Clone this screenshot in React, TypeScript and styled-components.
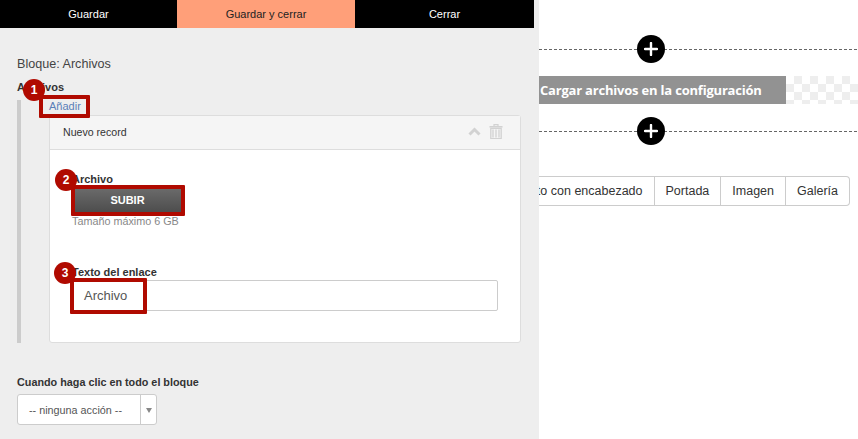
import { createGlobalStyle } from "styled-components";
import styled from "styled-components";

const GlobalStyle = createGlobalStyle`
  html, body {
    margin: 0;
    padding: 0;
    background: #ffffff;
    font-family: "Liberation Sans", Arial, sans-serif;
  }
`;

function ChevronIcon() {
  return (
    <svg width="13" height="9" viewBox="0 0 13 9">
      <path d="M1.5 7.5 L6.5 2.5 L11.5 7.5" fill="none" stroke="#d2d2d2" strokeWidth="3" />
    </svg>
  );
}

function TrashIcon() {
  return (
    <svg width="14" height="15" viewBox="0 0 14 15">
      <path d="M5 2 V0.7 H9 V2" fill="none" stroke="#d2d2d2" strokeWidth="1.2" />
      <rect x="0.5" y="2" width="13" height="1.6" fill="#d2d2d2" />
      <path d="M1.8 4.4 H12.2 V14.6 H1.8 Z M4 5.6 V13.4 M7 5.6 V13.4 M10 5.6 V13.4" fill="none" stroke="#d2d2d2" strokeWidth="1.3" />
    </svg>
  );
}

function PlusCircle() {
  return (
    <PlusBadge>
      <svg width="14" height="14" viewBox="0 0 14 14">
        <path d="M7 1 V13 M1 7 H13" stroke="#ffffff" strokeWidth="2.4" strokeLinecap="round" />
      </svg>
    </PlusBadge>
  );
}

function App() {
  return (
    <Page>
      <GlobalStyle />
      <EditorPanel>
        <TopBar>
          <TopButton>Guardar</TopButton>
          <TopButton $accent>Guardar y cerrar</TopButton>
          <TopButton>Cerrar</TopButton>
        </TopBar>

        <Form>
          <BlockTitle>Bloque: Archivos</BlockTitle>
          <FieldLabel>Archivos</FieldLabel>
          <Repeater>
            <AddLink>Añadir</AddLink>
            <Card>
              <CardHeader>
                <span>Nuevo record</span>
                <CardActions>
                  <ChevronIcon />
                  <TrashIcon />
                </CardActions>
              </CardHeader>
              <CardBody>
                <FileLabel>Archivo</FileLabel>
                <UploadButton>SUBIR</UploadButton>
                <Hint>Tamaño máximo 6 GB</Hint>
                <LinkLabel>Texto del enlace</LinkLabel>
                <TextBox>Archivo</TextBox>
              </CardBody>
            </Card>
          </Repeater>
          <ClickLabel>Cuando haga clic en todo el bloque</ClickLabel>
          <Select>
            <SelectValue>-- ninguna acción --</SelectValue>
            <SelectArrow />
          </Select>
        </Form>

        <Highlight $left={39} $top={95} $width={51} $height={23} />
        <Highlight $left={71} $top={185} $width={114} $height={31} />
        <Highlight $left={70} $top={278} $width={77} $height={36} />
        <Marker $left={23} $top={79}>1</Marker>
        <Marker $left={55} $top={169}>2</Marker>
        <Marker $left={54} $top={262}>3</Marker>
      </EditorPanel>

      <Preview>
        <Divider $top={35}>
          <PlusCircle />
        </Divider>
        <BannerRow>
          <Banner>Cargar archivos en la configuración</Banner>
          <Checker />
        </BannerRow>
        <Divider $top={13}>
          <PlusCircle />
        </Divider>
        <Tabs>
          <Tab>Texto con encabezado</Tab>
          <Tab>Portada</Tab>
          <Tab>Imagen</Tab>
          <Tab>Galería</Tab>
        </Tabs>
      </Preview>
    </Page>
  );
}

export default App;

const Page = styled.div`
  display: flex;
  width: 858px;
  height: 439px;
  overflow: hidden;
`;

const EditorPanel = styled.div`
  position: relative;
  flex: 0 0 539px;
  background-color: #eeeeee;
`;

const TopBar = styled.div`
  display: grid;
  grid-template-columns: 177px 178px 179px;
  width: 534px;
  height: 28px;
  background-color: #000000;
`;

const TopButton = styled.div<{ $accent?: boolean }>`
  display: flex;
  align-items: center;
  justify-content: center;
  font-size: 11px;
  background-color: ${(p) => (p.$accent ? "#ff9f79" : "#000000")};
  color: ${(p) => (p.$accent ? "#222222" : "#ffffff")};
`;

const Form = styled.div`
  padding: 28px 0 0 17px;
`;

const BlockTitle = styled.div`
  font-size: 12.6px;
  line-height: 16px;
  color: #444444;
`;

const FieldLabel = styled.div`
  font-size: 11px;
  line-height: 14px;
  font-weight: bold;
  color: #333333;
  margin-top: 8px;
`;

const Repeater = styled.div`
  box-sizing: border-box;
  width: 504px;
  height: 243px;
  margin-top: 6px;
  padding-left: 28px;
  border-left: 4px solid #cccccc;
`;

const AddLink = styled.div`
  height: 15px;
  font-size: 11px;
  line-height: 13px;
  color: #5a7fb8;
`;

const Card = styled.div`
  box-sizing: border-box;
  width: 472px;
  height: 228px;
  border: 1px solid #dddddd;
  border-radius: 3px;
  background-color: #ffffff;
`;

const CardHeader = styled.div`
  display: flex;
  align-items: center;
  justify-content: space-between;
  box-sizing: border-box;
  height: 34px;
  padding: 0 17px 2px 13px;
  background-color: #f5f5f5;
  border-bottom: 1px solid #dddddd;
  font-size: 10.6px;
  color: #333333;
`;

const CardActions = styled.div`
  display: flex;
  align-items: center;
  gap: 8px;
`;

const CardBody = styled.div`
  padding: 14px 22px 0;
`;

const FileLabel = styled(FieldLabel)`
  margin-top: 8px;
`;

const UploadButton = styled.div`
  display: flex;
  align-items: center;
  justify-content: center;
  box-sizing: border-box;
  width: 108px;
  height: 25px;
  margin: 2px 0 0 2px;
  padding-bottom: 2px;
  background: linear-gradient(#6b6b6b, #4c4c4c);
  border-right: 1px solid #ffffff;
  font-size: 11px;
  font-weight: bold;
  color: #ffffff;
`;

const Hint = styled.div`
  margin-top: 2px;
  font-size: 10.8px;
  line-height: 13px;
  color: #888888;
`;

const LinkLabel = styled(FieldLabel)`
  margin-top: 37px;
`;

const TextBox = styled.div`
  display: flex;
  align-items: center;
  box-sizing: border-box;
  width: 426px;
  height: 31px;
  margin-top: 1px;
  padding-left: 11px;
  border: 1px solid #cccccc;
  border-radius: 2px;
  background-color: #ffffff;
  font-size: 13px;
  color: #555555;
`;

const ClickLabel = styled(FieldLabel)`
  margin-top: 32px;
  font-size: 10.8px;
`;

const Select = styled.div`
  display: flex;
  box-sizing: border-box;
  width: 140px;
  height: 31px;
  margin-top: 5px;
  border: 1px solid #cccccc;
  border-radius: 3px;
  background-color: #ffffff;
`;

const SelectValue = styled.div`
  display: flex;
  align-items: center;
  flex: 1;
  padding-left: 11px;
  font-size: 10.8px;
  color: #555555;
`;

const SelectArrow = styled.div`
  position: relative;
  flex: 0 0 15px;
  border-left: 1px solid #cccccc;

  &::after {
    content: "";
    position: absolute;
    left: 5px;
    top: 13px;
    border-left: 3px solid transparent;
    border-right: 3px solid transparent;
    border-top: 5px solid #888888;
  }
`;

const Highlight = styled.div<{ $left: number; $top: number; $width: number; $height: number }>`
  position: absolute;
  box-sizing: border-box;
  left: ${(p) => p.$left}px;
  top: ${(p) => p.$top}px;
  width: ${(p) => p.$width}px;
  height: ${(p) => p.$height}px;
  border: 4px solid #b00a00;
  border-radius: 1px;
`;

const Marker = styled.div<{ $left: number; $top: number }>`
  position: absolute;
  display: flex;
  align-items: center;
  justify-content: center;
  left: ${(p) => p.$left}px;
  top: ${(p) => p.$top}px;
  width: 22px;
  height: 22px;
  border-radius: 50%;
  background-color: #b00a00;
  color: #ffffff;
  font-size: 12px;
  font-weight: bold;
`;

const Preview = styled.div`
  flex: 1;
  min-width: 0;
  overflow: hidden;
`;

const Divider = styled.div<{ $top: number }>`
  display: flex;
  align-items: center;
  justify-content: center;
  height: 28px;
  margin-top: ${(p) => p.$top}px;
  padding-right: 96px;
  background: repeating-linear-gradient(90deg, #666666 0 3px, transparent 3px 5px) 0 50% / 100% 1px no-repeat;
`;

const PlusBadge = styled.div`
  display: flex;
  align-items: center;
  justify-content: center;
  width: 28px;
  height: 28px;
  border-radius: 50%;
  background-color: #000000;
`;

const BannerRow = styled.div`
  display: flex;
  height: 28px;
  margin-top: 13px;
`;

const Banner = styled.div`
  display: flex;
  align-items: center;
  flex: 0 0 247px;
  padding-left: 1px;
  box-sizing: border-box;
  background-color: #929292;
  color: #ffffff;
  font-family: "Open Sans", sans-serif;
  font-size: 13px;
  font-weight: 700;
  letter-spacing: -0.2px;
  white-space: nowrap;
`;

const Checker = styled.div`
  flex: 1;
  background: repeating-conic-gradient(#eeeeee 0 25%, #ffffff 0 50%) 0 0 / 16px 16px;
`;

const Tabs = styled.div`
  display: flex;
  justify-content: flex-end;
  box-sizing: border-box;
  width: 311px;
  height: 30px;
  margin-top: 31px;
  border: 1px solid #cccccc;
  border-left: 0;
  border-radius: 0 4px 4px 0;
  font-size: 12.5px;
  color: #333333;
`;

const Tab = styled.div`
  display: flex;
  flex: none;
  align-items: center;
  padding: 0 11px;
  white-space: nowrap;

  & + & {
    border-left: 1px solid #cccccc;
  }
`;
